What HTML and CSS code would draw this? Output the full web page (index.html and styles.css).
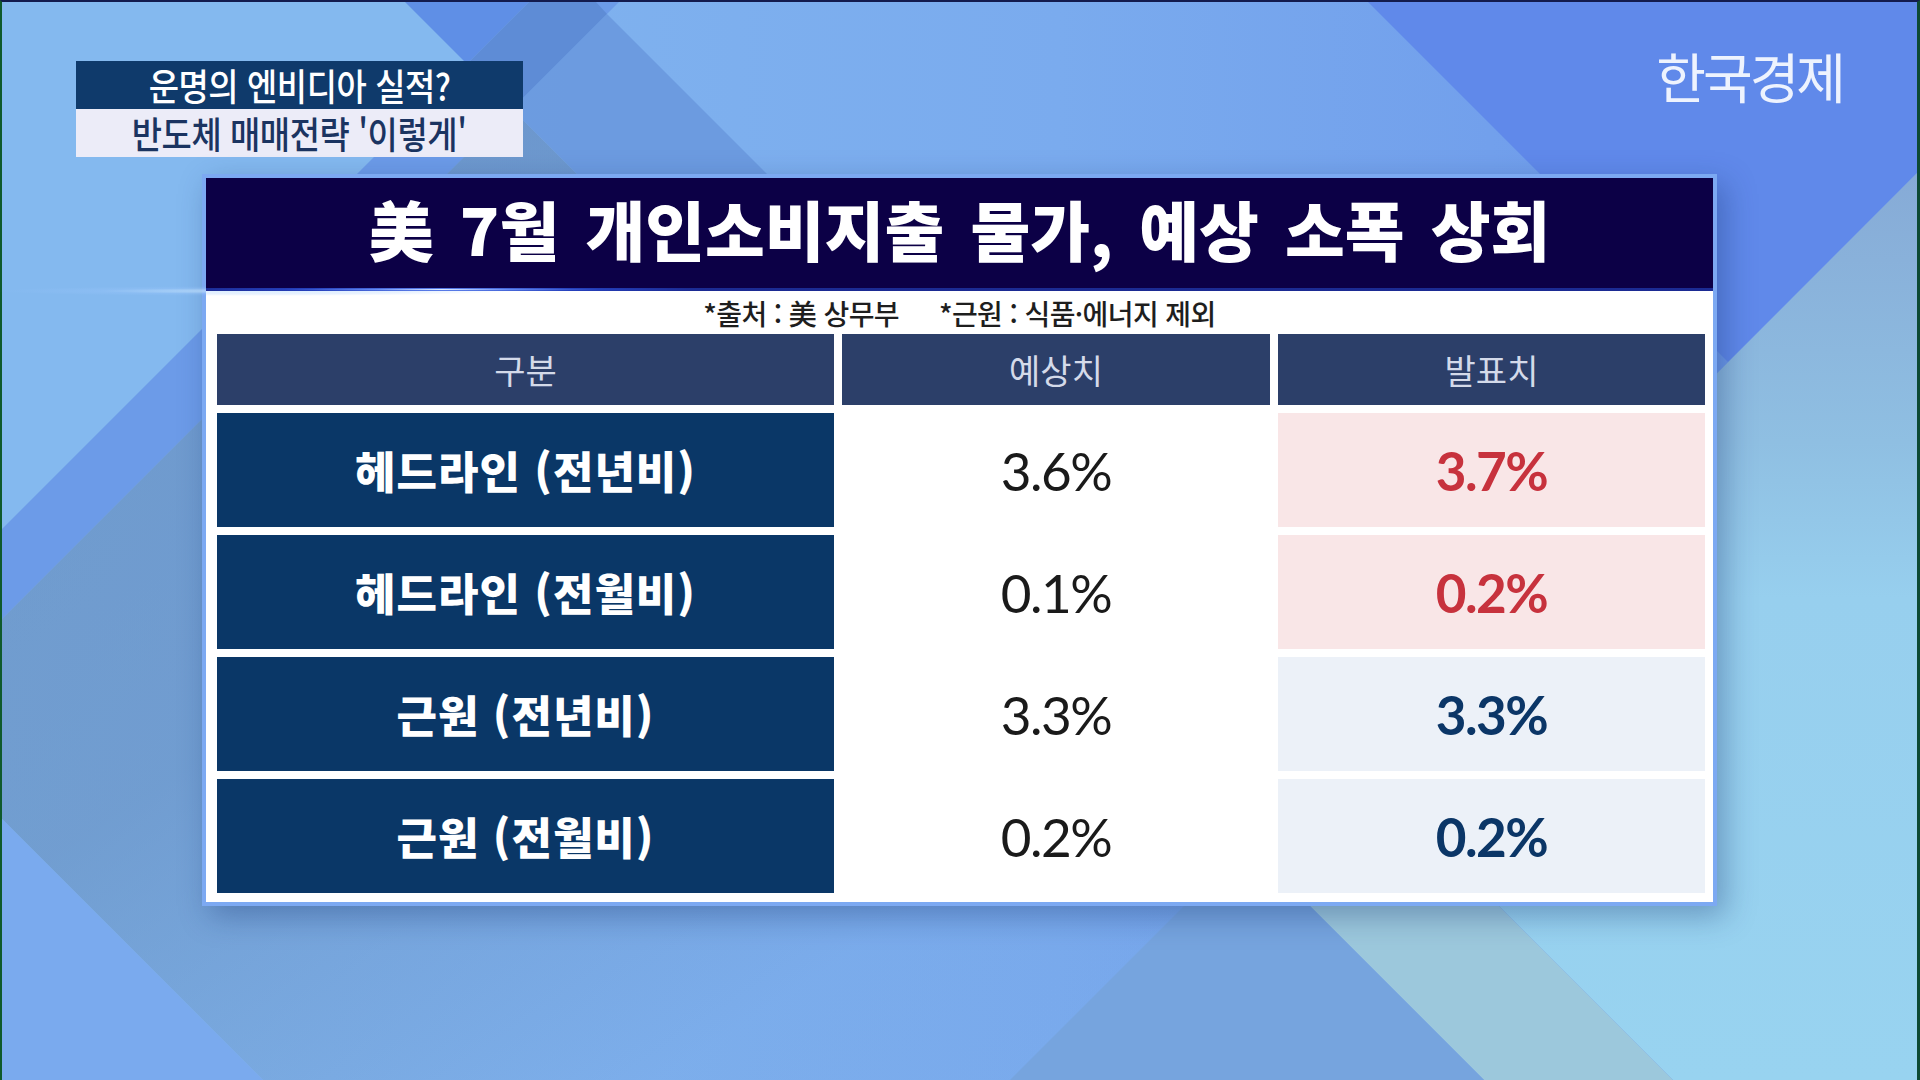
FILE: index.html
```html
<!DOCTYPE html>
<html lang="ko">
<head>
<meta charset="utf-8">
<title>美 7월 개인소비지출 물가</title>
<link rel="stylesheet" href="styles.css">
</head>
<body>
<div class="screen">
  <div class="top">
    <div class="caption">
      <div class="cap-top"><span class="cap-text">운명의 엔비디아 실적?</span></div>
      <div class="cap-bottom"><span class="cap-text">반도체 매매전략 '이렇게'</span></div>
    </div>
    <div class="logo">한국경제</div>
  </div>
  <div class="panel">
    <div class="title">美 7월 개인소비지출 물가, 예상 소폭 상회</div>
    <div class="source">*출처 : 美 상무부<span class="sep"></span>*근원 : 식품·에너지 제외</div>
    <div class="table">
      <div class="th">구분</div>
      <div class="th">예상치</div>
      <div class="th">발표치</div>

      <div class="label">헤드라인 (전년비)</div>
      <div class="val">3.6%</div>
      <div class="res up">3.7%</div>

      <div class="label">헤드라인 (전월비)</div>
      <div class="val">0.1%</div>
      <div class="res up">0.2%</div>

      <div class="label">근원 (전년비)</div>
      <div class="val">3.3%</div>
      <div class="res same">3.3%</div>

      <div class="label">근원 (전월비)</div>
      <div class="val">0.2%</div>
      <div class="res same">0.2%</div>
    </div>
  </div>
</div>
</body>
</html>
```

FILE: styles.css
```css
html, body {
  margin: 0;
  padding: 0;
  width: 1920px;
  height: 1080px;
  overflow: hidden;
}

body {
  font-family: "Noto Sans CJK KR", "Noto Sans", sans-serif;
}

.screen {
  width: 1920px;
  height: 1080px;
  box-sizing: border-box;
  border-top: 2px solid #131b4e;
  border-left: 2px solid #0f5a2c;
  border-right: 3px solid #0d4a34;
  display: flex;
  flex-direction: column;
  background-color: #7fb0ee;
  background-image: url("data:image/svg+xml;utf8,<svg xmlns='http://www.w3.org/2000/svg' width='1920' height='1080' viewBox='0 0 1920 1080'><defs><linearGradient id='b' x1='0' y1='0' x2='1' y2='0'><stop offset='0' stop-color='%2384b8ee'/><stop offset='0.55' stop-color='%237aabee'/><stop offset='1' stop-color='%236a95ea'/></linearGradient><linearGradient id='c' x1='0' y1='0' x2='0' y2='1'><stop offset='0' stop-color='%2386aad6'/><stop offset='0.3' stop-color='%238fbfe2'/><stop offset='0.47' stop-color='%2397cfee'/><stop offset='1' stop-color='%2398d3f0'/></linearGradient><linearGradient id='g' x1='0' y1='0' x2='1' y2='1'><stop offset='0' stop-color='%23587aa8' stop-opacity='0.5'/><stop offset='0.4' stop-color='%23587aa8' stop-opacity='0.42'/><stop offset='0.72' stop-color='%23587aa8' stop-opacity='0.04'/><stop offset='1' stop-color='%23587aa8' stop-opacity='0'/></linearGradient></defs><rect width='1920' height='1080' fill='url(%23b)'/><polygon points='0,0 527,0 0,527' fill='%2384b9ef'/><polygon points='527,0 617,0 0,617 0,527' fill='%236c9be8'/><polygon points='510,107 0,617 0,817 263,1080 1484,1080' fill='url(%23g)'/><polygon points='0,817 0,1080 263,1080' fill='%237aaaee'/><polygon points='403,0 527,0 465,62' fill='%235f8fe6'/><polygon points='465,62 527,0 594,0 605,12 510,107' fill='%235e8cd6'/><polygon points='510,107 605,12 1340,747 1245,841' fill='%236896dc' fill-opacity='0.8'/><polygon points='1366,0 1920,0 1920,166 1726,360' fill='%236089ea'/><polygon points='1340,747 1920,166 1920,1080 1673,1080' fill='url(%23c)'/><polygon points='1245,841 1340,747 1673,1080 1484,1080' fill='%239cc8dc'/><polygon points='1245,841 1484,1080 1006,1080' fill='%2376a4de'/></svg>");
  background-size: 1920px 1080px;
  background-repeat: no-repeat;
}

/* ---------- top row ---------- */
.top {
  display: flex;
  justify-content: space-between;
  align-items: flex-start;
  padding: 0 74px 0 74px;
  margin-top: 53px;
}

.caption {
  width: 447px;
  margin-top: 6px;
  display: flex;
  flex-direction: column;
}

.cap-top,
.cap-bottom {
  height: 48px;
  display: flex;
  align-items: center;
  justify-content: center;
}

.cap-top {
  background: #0f3a6b;
  color: #ffffff;
}

.cap-bottom {
  background: #ececf8;
  color: #1b3461;
}

.cap-text {
  display: inline-block;
  font-size: 37px;
  font-weight: 500;
  line-height: 1;
  white-space: nowrap;
  transform: scaleX(0.89);
  letter-spacing: -0.5px;
}

.logo {
  margin-top: -6px;
  font-size: 54px;
  font-weight: 400;
  line-height: 1;
  color: rgba(246, 249, 255, 0.95);
  letter-spacing: -3px;
}

/* ---------- panel ---------- */
.panel {
  position: relative;
  margin-top: 17px;
  margin-left: 200px;
  width: 1515px;
  height: 732px;
  box-sizing: border-box;
  border: 4px solid #7ca9f2;
  background: #ffffff;
  box-shadow: 8px 10px 28px rgba(20, 50, 110, 0.35);
  display: flex;
  flex-direction: column;
}

.panel::before {
  content: "";
  position: absolute;
  left: -210px;
  top: 108px;
  width: 520px;
  height: 10px;
  background: radial-gradient(ellipse closest-side, rgba(210, 235, 255, 0.75), rgba(160, 200, 255, 0.25) 60%, rgba(160, 200, 255, 0));
  pointer-events: none;
}

.title {
  position: relative;
  height: 113px;
  box-sizing: border-box;
  padding-bottom: 12px;
  background: #0c0046;
  color: #ffffff;
  font-size: 65px;
  font-weight: 900;
  letter-spacing: 0;
  word-spacing: 8px;
  line-height: 1;
  display: flex;
  align-items: center;
  justify-content: center;
  white-space: nowrap;
}

.title::after {
  content: "";
  position: absolute;
  left: 0;
  right: 0;
  bottom: 0;
  height: 3px;
  background: radial-gradient(ellipse 260px 3px at 236px 50%, rgba(220, 235, 255, 1) 0, rgba(110, 150, 255, 0.9) 25%, rgba(40, 70, 200, 0.8) 60%, rgba(28, 44, 150, 0.7) 100%), #19268a;
}

.source {
  height: 43px;
  display: flex;
  align-items: center;
  justify-content: center;
  font-size: 28px;
  font-weight: 500;
  color: #1e1e1e;
  letter-spacing: -0.6px;
  white-space: nowrap;
}

.sep {
  display: inline-block;
  width: 40px;
}

/* ---------- table ---------- */
.table {
  display: grid;
  grid-template-columns: 617px 428px 427px;
  grid-template-rows: 71px repeat(4, 114px);
  column-gap: 8px;
  row-gap: 8px;
  padding: 0 8px 0 11px;
}

.th,
.label,
.val,
.res {
  display: flex;
  align-items: center;
  justify-content: center;
  white-space: nowrap;
}

.th {
  background: #2c3f69;
  color: #d4dae9;
  font-size: 34px;
  font-weight: 400;
}

.label {
  background: #0a3767;
  color: #ffffff;
  font-size: 44px;
  font-weight: 900;
  letter-spacing: 1px;
}

.val,
.res {
  font-family: Lato, "Noto Sans", sans-serif;
  font-size: 53px;
  letter-spacing: -1.5px;
}

.val {
  background: #ffffff;
  color: #1a1a1a;
  font-weight: 400;
}

.res {
  font-weight: 700;
}

.res.up {
  background: #f9e6e7;
  color: #c7323d;
}

.res.same {
  background: #ecf1f8;
  color: #0b3667;
}
```
